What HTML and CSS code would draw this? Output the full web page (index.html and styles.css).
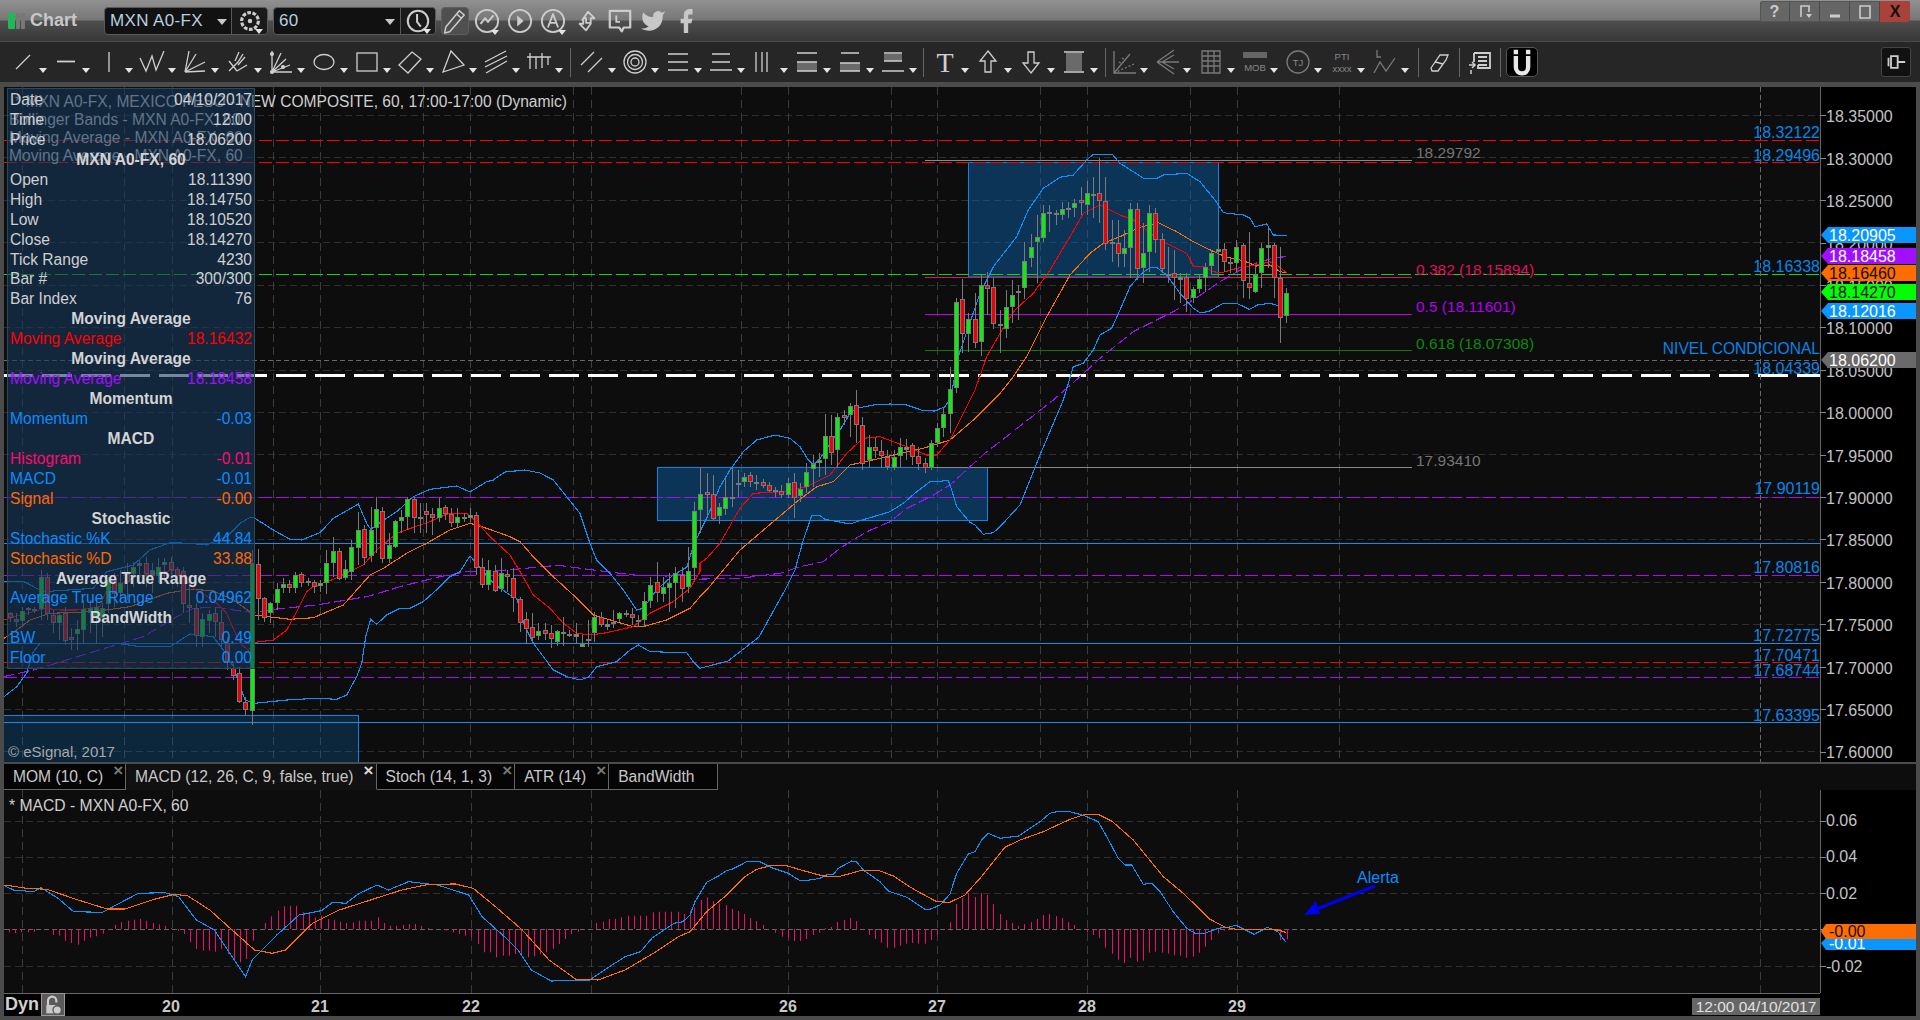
FILE: index.html
```html
<!DOCTYPE html>
<html lang="en">
<head>
<meta charset="utf-8">
<title>Chart - MXN A0-FX</title>
<link rel="stylesheet" href="styles.css">
</head>
<body>
<div class="window">
  <header class="titlebar">
    <div class="logo"><i class="logo-green"></i><i class="logo-gray"></i><i class="logo-gray"></i></div>
    <div class="app-name">Chart</div>
    <div class="combo combo-symbol">
      <span class="combo-text">MXN A0-FX</span><i class="caret caret-combo"></i>
      <span class="combo-btn">
        <svg class="ico" viewBox="0 0 28 28"><circle cx="14" cy="14" r="9" stroke-dasharray="4 1.6" stroke-width="3.4"/><circle cx="14" cy="14" r="2.4" fill="#ccc" stroke="none"/></svg><i class="caret caret-mini"></i>
      </span>
    </div>
    <div class="combo combo-interval">
      <span class="combo-text">60</span><i class="caret caret-combo"></i>
      <span class="combo-btn combo-btn-clock">
        <svg class="ico" viewBox="0 0 28 28"><circle cx="14" cy="14" r="11" stroke-width="2.2"/><path d="M13 6.5V15L17 20" stroke-width="2.2"/></svg><i class="caret caret-mini"></i>
      </span>
    </div>
    <div class="pencil-btn"><svg class="ico" viewBox="0 0 24 24"><path d="M7 22L2.5 23L3.5 17.5L16 2.5L20.5 6.5L7.5 21.5ZM13.5 5.5L18 9.5" stroke-width="1.4"/></svg></div>
    <div class="title-icons">
      <span class="title-ico"><svg class="ico" viewBox="0 0 28 28"><circle cx="14" cy="14" r="12" stroke-width="2"/><path d="M7 17L12 11L15 15L21 8" stroke-width="2.2"/></svg><i class="caret caret-mini"></i></span>
      <span class="title-ico"><svg class="ico" viewBox="0 0 28 28"><circle cx="14" cy="14" r="12" stroke-width="2"/><path d="M11 8L18 14L11 20Z" fill="#ccc" stroke="none"/></svg></span>
      <span class="title-ico"><svg class="ico" viewBox="0 0 28 28"><circle cx="14" cy="14" r="12" stroke-width="2"/><path d="M8.5 21L14 6.5L19.5 21M10.5 16H17.5" stroke-width="2"/></svg><i class="caret caret-mini"></i></span>
      <span class="title-ico"><svg class="ico" viewBox="0 0 28 28"><path d="M9 13L15 4L15 4L22 11H18L18 16H13V11H10ZM18 15L18 17L13 24L6 17H10V13" stroke-width="2"/></svg></span>
      <span class="title-ico"><svg class="ico" viewBox="0 0 28 28"><path d="M3 3H25V21H18L16 25L13 21H3Z" stroke-width="2.4"/><path d="M10 8V15H14" stroke-width="2"/></svg></span>
      <span class="title-ico"><svg class="ico" viewBox="0 0 24 24"><path class="solid" d="M23 3a10.900 10.900 0 0 1-3 1.400 4.500 4.500 0 0 0-7.900 3v1A10.700 10.700 0 0 1 3 4s-4 9 5 13a11.600 11.600 0 0 1-7 2c9 5 20 0 20-11.500a4.500 4.500 0 0 0 0-.8A7.700 7.700 0 0 0 23 3z"/></svg></span>
      <span class="title-ico"><svg class="ico" viewBox="0 0 24 24"><path class="solid" d="M18 1h-3a5 5 0 0 0-5 5v4H7v4h3v9h4v-9h3l1-4h-4V7a1 1 0 0 1 1-1h3z"/></svg></span>
    </div>
    <div class="win-btns">
      <span class="win-btn">?</span>
      <span class="win-btn"><svg class="ico-sm" viewBox="0 0 14 16"><path d="M3 13V2H11V8" stroke-width="1.6"/><path d="M8 10H14L11 14Z" fill="#ccc" stroke="none"/></svg></span>
      <span class="win-btn"><svg class="ico-sm" viewBox="0 0 14 16"><path d="M2 12H12" stroke-width="3"/></svg></span>
      <span class="win-btn"><svg class="ico-sm" viewBox="0 0 14 16"><path d="M2 2H12V14H2Z" stroke-width="1.6"/></svg></span>
      <span class="win-btn win-close">X</span>
    </div>
  </header>

  <nav class="toolbar">
    <div class="tool-group">
      <span class="tool"><svg viewBox="0 0 24 24"><path d="M5 19L19 5"/></svg><i class="caret"></i></span>
      <span class="tool"><svg viewBox="0 0 24 24"><path d="M3 11.500H21" stroke-width="1.800"/></svg><i class="caret"></i></span>
      <span class="tool"><svg viewBox="0 0 24 24"><path d="M12 2V22"/></svg><i class="caret"></i></span>
      <span class="tool"><svg viewBox="0 0 24 24"><path d="M0 8L6 21L12 6L16 20L24 1"/></svg><i class="caret"></i></span>
      <span class="tool"><svg viewBox="0 0 24 24"><path d="M2 22L6 1M2 22L13 4M2 22L22 12M2 22L22 21"/></svg><i class="caret"></i></span>
      <span class="tool"><svg viewBox="0 0 24 24"><path d="M3 11L11 21M3 21L12 12L17 4M9 11L13 2M12 15L19 7M11 21L21 15"/></svg><i class="caret"></i></span>
      <span class="tool"><svg viewBox="0 0 24 24"><path d="M3 1V22M3 22H23M3 22L12 3M3 22L17 9M3 22L21 15"/><circle cx="3" cy="4" r="1.400" class="node"/><circle cx="14" cy="17" r="1.400" class="node"/><circle cx="3" cy="22" r="1.400" class="node"/></svg><i class="caret"></i></span>
      <span class="tool"><svg viewBox="0 0 24 24"><ellipse cx="12" cy="12" rx="10" ry="7.500"/></svg><i class="caret"></i></span>
      <span class="tool"><svg viewBox="0 0 24 24"><rect x="2" y="3" width="20" height="18"/></svg><i class="caret"></i></span>
      <span class="tool"><svg viewBox="0 0 24 24"><path d="M14 2L23 9L10 23L1 15Z"/></svg><i class="caret"></i></span>
      <span class="tool"><svg viewBox="0 0 24 24"><path d="M10 1L23 15L2 22Z"/></svg><i class="caret"></i></span>
      <span class="tool"><svg viewBox="0 0 24 24"><path d="M1 12L22 1M1 17L23 6M2 23L23 11"/></svg><i class="caret"></i></span>
      <span class="tool"><svg viewBox="0 0 24 24"><path d="M0 7H24M3 3V19M9 7V19M15 3V18M21 7V15"/></svg><i class="caret"></i></span>
    </div>
    <i class="tool-sep tool-sep-a"></i>
    <div class="tool-group">
      <span class="tool"><svg viewBox="0 0 24 24"><path d="M1 15L14 2M8 22L22 8"/></svg><i class="caret"></i></span>
      <span class="tool"><svg viewBox="0 0 24 24"><circle cx="12" cy="12" r="11"/><circle cx="12" cy="12" r="7.500"/><circle cx="12" cy="12" r="4"/></svg><i class="caret"></i></span>
      <span class="tool"><svg viewBox="0 0 24 24"><path d="M2 4H22M2 12H22M2 20H22"/></svg><i class="caret"></i></span>
      <span class="tool"><svg viewBox="0 0 24 24"><path d="M3 4H21M3 12H21M1 20H23"/></svg><i class="caret"></i></span>
      <span class="tool"><svg viewBox="0 0 24 24"><path d="M4 2V22M10 2V22M15 2V22"/></svg><i class="caret"></i></span>
      <span class="tool"><svg viewBox="0 0 24 24"><rect class="gray" x="2" y="12" width="20" height="9"/><path d="M2 3H22M2 12H22M2 21H22"/></svg><i class="caret"></i></span>
      <span class="tool"><svg viewBox="0 0 24 24"><rect class="gray" x="2" y="13" width="20" height="8"/><path d="M3 3H21M2 13H22M2 21H22"/></svg><i class="caret"></i></span>
      <span class="tool"><svg viewBox="0 0 24 24"><rect class="gray" x="3" y="4" width="18" height="7"/><path d="M3 3H21M3 11H21M1 21H23"/></svg><i class="caret"></i></span>
    </div>
    <i class="tool-sep tool-sep-b"></i>
    <div class="tool-group">
      <span class="tool"><svg viewBox="0 0 24 24"><text class="tool-t" x="12" y="22">T</text></svg><i class="caret"></i></span>
      <span class="tool"><svg viewBox="0 0 24 24"><path d="M12 1L20 11H15V22H9V11H4Z"/></svg><i class="caret"></i></span>
      <span class="tool"><svg viewBox="0 0 24 24"><path d="M12 23L20 13H15V2H9V13H4Z"/></svg><i class="caret"></i></span>
      <span class="tool"><svg viewBox="0 0 24 24"><rect class="gray" x="4" y="3" width="16" height="18"/><path d="M2 2H22M2 22H22"/></svg><i class="caret"></i></span>
    </div>
    <i class="tool-sep tool-sep-c"></i>
    <div class="tool-group tool-group-dim">
      <span class="tool"><svg viewBox="0 0 24 24"><path d="M2 1V23H24M2 23L18 4" /><path d="M2 23L22 14M7 12L10 14M10 8L13 10" stroke-dasharray="2 2"/></svg><i class="caret"></i></span>
      <span class="tool"><svg viewBox="0 0 24 24"><path d="M1 12L18 0M1 12L23 12M1 12L18 24M6 12L18 5M6 12L18 19"/></svg><i class="caret"></i></span>
      <span class="tool"><svg viewBox="0 0 24 24"><path d="M3 1H21V23H3ZM9 1V23M15 1V23M3 6H21M3 11H21M3 16H21"/></svg><i class="caret"></i></span>
      <span class="tool"><svg viewBox="0 0 24 24"><rect class="gray" x="0" y="2" width="24" height="6"/><text class="tool-small" x="12" y="21">MOB</text></svg><i class="caret"></i></span>
      <span class="tool"><svg viewBox="0 0 24 24"><circle cx="12" cy="12" r="11"/><text class="tool-small" x="12" y="16">TJ</text></svg><i class="caret"></i></span>
      <span class="tool"><svg viewBox="0 0 24 24"><text class="tool-small" x="12" y="10">PTI</text><text class="tool-small" x="12" y="22">xxxx</text></svg><i class="caret"></i></span>
      <span class="tool"><svg viewBox="0 0 24 24"><path d="M4 0V7H8M1 23L7 12L13 21L22 8"/></svg><i class="caret"></i></span>
    </div>
    <i class="tool-sep tool-sep-d"></i>
    <span class="tool tool-plain"><svg viewBox="0 0 24 24"><path d="M4 18L13 5H21L19 10L11 21H5ZM8.500 12L16 14"/></svg></span>
    <i class="tool-sep"></i>
    <span class="tool tool-plain"><svg viewBox="0 0 24 24"><path d="M6 3H22V18H10V15M6 3V12M10 7H19M10 11H19M10 15H19" stroke-width="1.800"/><path d="M1 15H7M4 12L7 15L4 18M3 20V24" stroke-width="1.500"/></svg></span>
    <i class="tool-sep"></i>
    <span class="magnet"><svg viewBox="0 0 24 32"><path class="magnet-u" d="M5 9V22A7 7 0 0 0 19 22V9"/><path class="magnet-tip" d="M5 2V7M19 2V7"/></svg></span>
    <span class="pin"><svg viewBox="0 0 24 24"><path d="M3 7V17M6 5H14V19H6ZM14 12H23" stroke-width="2.200"/></svg></span>
  </nav>

  <section class="chart-pane">
    <svg class="plot" viewBox="4 87 1912 675" xmlns="http://www.w3.org/2000/svg">
      <rect class="axis-bg" x="1820" y="87" width="96" height="675"/>
      <g id="grid"></g>
      <g id="boxes">
        <rect class="box" x="968.500" y="162.500" width="250" height="114.500"/>
        <rect class="box" x="657.500" y="467.500" width="330" height="53"/>
        <rect class="box box-low" x="3" y="715.500" width="355.500" height="50"/>
      </g>
      <g class="levels">
        <path class="lv red" d="M4 140.500H1820M4 162.500H1820M4 662.500H1820"/>
        <path class="lv lime" d="M4 274.500H1820"/>
        <path class="lv white" d="M3 375.500H1820"/>
        <path class="lv purple" d="M4 497.500H1820M4 575.500H1820M4 677.500H1820"/>
        <path class="lv steel" d="M4 543.500H1820M4 643.500H1820M4 722.500H1820"/>
        <path class="lv cross" d="M4 360.500H1820M1760.500 87V762"/>
        <path class="lv fib-gray" d="M925 160.500H1412M925 467.500H1412"/>
        <path class="lv fib-pink" d="M925 277.500H1412"/>
        <path class="lv fib-purple" d="M925 314.500H1412"/>
        <path class="lv fib-green" d="M925 350.500H1412"/>
      </g>
      <g id="studies"></g>
      <g id="candles"></g>

      <text class="head" x="15" y="107">* MXN A0-FX, MEXICO PESO - NEW COMPOSITE, 60, 17:00-17:00 (Dynamic)</text>
      <text class="head" x="9" y="125">Bollinger Bands - MXN A0-FX, 60</text>
      <text class="head" x="9" y="143">Moving Average - MXN A0-FX, 60</text>
      <text class="head" x="9" y="161">Moving Average - MXN A0-FX, 60</text>

      <text class="copy" x="8" y="757">© eSignal, 2017</text>

      <text class="fib-l fib-l-gray" x="1416" y="158">18.29792</text>
      <text class="fib-l fib-l-pink" x="1416" y="275">0.382 (18.15894)</text>
      <text class="fib-l fib-l-purple" x="1416" y="312">0.5 (18.11601)</text>
      <text class="fib-l fib-l-green" x="1416" y="349">0.618 (18.07308)</text>
      <text class="fib-l fib-l-gray" x="1416" y="466">17.93410</text>

      <g class="lvl-labels">
        <text x="1820" y="138">18.32122</text>
        <text x="1820" y="161">18.29496</text>
        <text x="1820" y="272">18.16338</text>
        <text class="lvl-note" x="1820" y="354">NIVEL CONDICIONAL</text>
        <text x="1820" y="374">18.04339</text>
        <text x="1820" y="494">17.90119</text>
        <text x="1820" y="573">17.80816</text>
        <text x="1820" y="641">17.72775</text>
        <text x="1820" y="661">17.70471</text>
        <text x="1820" y="676">17.68744</text>
        <text x="1820" y="721">17.63395</text>
      </g>

      <path class="axis-line" d="M1820.500 87V762"/>
      <path class="axis-ticks" d="M1820 115.500h6M1820 158.500h6M1820 200.500h6M1820 243.500h6M1820 285.500h6M1820 327.500h6M1820 370.500h6M1820 412.500h6M1820 455.500h6M1820 497.500h6M1820 539.500h6M1820 582.500h6M1820 624.500h6M1820 667.500h6M1820 709.500h6M1820 752.500h6"/>
      <g class="axis-labels">
        <text x="1826" y="122">18.35000</text>
        <text x="1826" y="165">18.30000</text>
        <text x="1826" y="207">18.25000</text>
        <text x="1826" y="250">18.20000</text>
        <text x="1826" y="292">18.15000</text>
        <text x="1826" y="334">18.10000</text>
        <text x="1826" y="377">18.05000</text>
        <text x="1826" y="419">18.00000</text>
        <text x="1826" y="462">17.95000</text>
        <text x="1826" y="504">17.90000</text>
        <text x="1826" y="546">17.85000</text>
        <text x="1826" y="589">17.80000</text>
        <text x="1826" y="631">17.75000</text>
        <text x="1826" y="674">17.70000</text>
        <text x="1826" y="716">17.65000</text>
        <text x="1826" y="758">17.60000</text>
      </g>
      <g class="tags">
        <path class="tag-blue" d="M1821 235L1828 227H1916V243H1828Z"/><text class="tag-w" x="1829" y="241">18.20905</text>
        <path class="tag-purple" d="M1821 256L1828 248H1916V264H1828Z"/><text class="tag-w" x="1829" y="262">18.18458</text>
        <path class="tag-orange" d="M1821 273L1828 265H1916V281H1828Z"/><text class="tag-k" x="1829" y="279">18.16460</text>
        <path class="tag-green" d="M1821 292L1828 284H1916V300H1828Z"/><text class="tag-k" x="1829" y="298">18.14270</text>
        <path class="tag-blue" d="M1821 311L1828 303H1916V319H1828Z"/><text class="tag-w" x="1829" y="317">18.12016</text>
        <path class="tag-gray" d="M1821 360L1828 352H1916V368H1828Z"/><text class="tag-w" x="1829" y="366">18.06200</text>
      </g>
    </svg>

    <aside class="info">
      <div class="row"><span>Date</span><span>04/10/2017</span></div>
      <div class="row"><span>Time</span><span>12:00</span></div>
      <div class="row"><span>Price</span><span>18.06200</span></div>
      <div class="row hdr">MXN A0-FX, 60</div>
      <div class="row"><span>Open</span><span>18.11390</span></div>
      <div class="row"><span>High</span><span>18.14750</span></div>
      <div class="row"><span>Low</span><span>18.10520</span></div>
      <div class="row"><span>Close</span><span>18.14270</span></div>
      <div class="row"><span>Tick Range</span><span>4230</span></div>
      <div class="row"><span>Bar #</span><span>300/300</span></div>
      <div class="row"><span>Bar Index</span><span>76</span></div>
      <div class="row hdr">Moving Average</div>
      <div class="row c-red"><span>Moving Average</span><span>18.16432</span></div>
      <div class="row hdr">Moving Average</div>
      <div class="row c-purple"><span>Moving Average</span><span>18.18458</span></div>
      <div class="row hdr">Momentum</div>
      <div class="row c-blue"><span>Momentum</span><span>-0.03</span></div>
      <div class="row hdr">MACD</div>
      <div class="row c-pink"><span>Histogram</span><span>-0.01</span></div>
      <div class="row c-blue"><span>MACD</span><span>-0.01</span></div>
      <div class="row c-orange"><span>Signal</span><span>-0.00</span></div>
      <div class="row hdr">Stochastic</div>
      <div class="row c-blue"><span>Stochastic %K</span><span>44.84</span></div>
      <div class="row c-orange"><span>Stochastic %D</span><span>33.88</span></div>
      <div class="row hdr">Average True Range</div>
      <div class="row c-blue"><span>Average True Range</span><span>0.04962</span></div>
      <div class="row hdr">BandWidth</div>
      <div class="row c-blue"><span>BW</span><span>0.49</span></div>
      <div class="row c-blue"><span>Floor</span><span>0.00</span></div>
    </aside>
  </section>

  <div class="tabs">
    <div class="tab">MOM (10, C)<span class="tab-x">×</span></div>
    <div class="tab tab-on">MACD (12, 26, C, 9, false, true)<span class="tab-x">×</span></div>
    <div class="tab">Stoch (14, 1, 3)<span class="tab-x">×</span></div>
    <div class="tab">ATR (14)<span class="tab-x">×</span></div>
    <div class="tab">BandWidth</div>
  </div>

  <section class="macd-pane">
    <svg class="plot" viewBox="4 790 1912 226" xmlns="http://www.w3.org/2000/svg">
      <rect class="axis-bg" x="1820" y="790" width="96" height="226"/>
      <rect class="axis-bg" x="4" y="993" width="1912" height="23"/>
      <g id="macd-grid"></g>
      <path class="zero" d="M4 929.500H1820"/>
      <g id="macd-hist"></g>
      <g id="macd-lines"></g>
      <text class="head head-macd" x="9" y="811">* MACD - MXN A0-FX, 60</text>
      <text class="alert" x="1357" y="883">Alerta</text>
      <path class="alert-arrow" d="M1375 886L1312 911"/>
      <path class="alert-head" d="M1304 915L1316 901L1320 914Z"/>
      <path class="axis-line" d="M1820.500 790V993M4 993.500H1820"/>
      <path class="axis-ticks" d="M1820 821.500h6M1820 857.500h6M1820 893.500h6M1820 929.500h6M1820 966.500h6"/>
      <g class="axis-labels">
        <text x="1826" y="826">0.06</text>
        <text x="1826" y="862">0.04</text>
        <text x="1826" y="899">0.02</text>
        <text x="1826" y="972">-0.02</text>
      </g>
      <g class="tags">
        <path class="tag-pink" d="M1821 932L1826 927V938Z"/>
        <path class="tag-blue" d="M1821 943L1826 938H1916V950H1826Z"/><text class="tag-w" x="1829" y="949">-0.01</text>
        <path class="tag-orange" d="M1821 931L1826 924H1916V939H1826Z"/><text class="tag-k" x="1829" y="937">-0.00</text>
      </g>
      <g class="dates">
        <text x="171" y="1012">20</text>
        <text x="320" y="1012">21</text>
        <text x="471" y="1012">22</text>
        <text x="788" y="1012">26</text>
        <text x="937" y="1012">27</text>
        <text x="1087" y="1012">28</text>
        <text x="1237" y="1012">29</text>
      </g>
      <rect class="stamp-bg" x="1692" y="998" width="128" height="17"/>
      <text class="stamp" x="1756" y="1012">12:00 04/10/2017</text>
    </svg>
    <div class="dyn">
      <span class="dyn-text">Dyn</span>
      <span class="dyn-lock"><svg viewBox="0 0 24 24"><path d="M6 12V7A5 5 0 0 1 16 7V9" stroke-width="2.600"/><rect class="solid" x="4" y="12" width="11" height="10"/><circle class="lock-dot" cx="17" cy="18" r="5"/></svg></span>
    </div>
  </section>
</div>
<script src="chart.js"></script>
</body>
</html>
```

FILE: styles.css
```css
* { box-sizing: border-box; }
html, body { margin: 0; padding: 0; background: #4a4a4a; }
body { font-family: "Liberation Sans", Arial, sans-serif; color: #ccc; overflow: hidden; }

.window { width: 1920px; height: 1020px; display: flex; flex-direction: column; padding: 0 4px 4px; background: #4b4b4b; }

/* title bar */
.titlebar {
  height: 41px; margin: 0 -4px; padding-left: 8px; display: flex; align-items: center; flex: none;
  background: linear-gradient(#909090 0, #777 20px, #4e4e4e 21px, #383838 41px);
}
.logo { display: flex; gap: 1px; width: 17px; height: 16px; }
.logo i { display: block; height: 16px; border-radius: 1px; }
.logo-green { width: 7px; background: #1db954; }
.logo-gray { width: 4px; background: #777; }
.app-name { margin-left: 5px; width: 74px; font-size: 18px; font-weight: bold; color: #c8c8c8; }
.combo { position: relative; display: flex; align-items: center; height: 28px; background: #111; border: 1px solid #5a5a5a; border-radius: 4px; font-size: 17px; color: #b8cfe0; }
.combo-symbol { width: 164px; }
.combo-interval { width: 163px; margin-left: 5px; }
.combo-text { padding-left: 5px; letter-spacing: .35px; }
.combo-btn { position: absolute; top: 0; bottom: 0; display: flex; align-items: center; justify-content: center; border-left: 1px solid #5a5a5a; background: #1a1a1a; border-radius: 0 4px 4px 0; }
.combo-symbol .combo-btn { left: 126px; width: 36px; }
.combo-interval .combo-btn { left: 126px; width: 35px; }
.ico { width: 26px; height: 26px; fill: none; stroke: #ccc; stroke-linejoin: round; }
.ico-sm { width: 14px; height: 16px; fill: none; stroke: #ccc; }
.solid { fill: #c8c8c8; stroke: none; }
.pencil-btn { width: 28px; height: 28px; margin-left: 5px; border: 1px solid #5f5f5f; border-radius: 4px; background: #4f4f4f; display: flex; align-items: center; justify-content: center; }
.title-icons { display: flex; margin-left: 1px; }
.title-ico { position: relative; width: 33.300px; height: 28px; display: flex; align-items: center; justify-content: center; }
.win-btns { margin-left: auto; margin-right: 10px; align-self: flex-start; margin-top: 1px; display: flex; height: 21px; background: #666; border-radius: 3px; box-shadow: inset 0 0 0 1px #555; }
.win-btn { width: 30px; display: flex; align-items: center; justify-content: center; border-right: 1px solid #4a4a4a; font-size: 16px; font-weight: bold; color: #ccc; }
.win-close { background: #a8423a; border-right: 0; border-radius: 0 3px 3px 0; color: #111; }

/* carets */
.caret { display: block; width: 0; height: 0; border: 4px solid transparent; border-bottom: 0; border-top: 5px solid #e4e4e4; }
.caret-combo { position: absolute; right: 40px; top: 11px; border-width: 6px 5px 0; border-top-color: #c8c8c8; }
.caret-mini { position: absolute; right: 4px; bottom: 0; }

/* drawing toolbar */
.toolbar {
  height: 41px; margin: 0 -4px; padding-left: 1.500px; display: flex; align-items: stretch; flex: none;
  background: #262626; border-top: 1px solid #4a4a4a; 
}
.tool-group { display: flex; }
.tool { position: relative; width: 43px; display: flex; align-items: center; justify-content: center; flex: none; }
.tool svg { width: 24px; height: 24px; fill: none; stroke: #cfcfcf; stroke-width: 1.300; overflow: visible; }
.tool .caret { position: absolute; left: 37px; top: 26px; }
.tool .node { fill: #cfcfcf; }
.tool .gray { fill: #6a6a6a; stroke: none; }
.tool-t { font: 28px "Liberation Serif", serif; text-anchor: middle; fill: #cfcfcf; stroke: none; }
.tool-small { font: 9.500px "Liberation Sans", sans-serif; text-anchor: middle; fill: #888; stroke: none; }
.tool-group-dim { margin-left: -3px; }
.tool-group-dim .tool { width: 43.500px; }
.tool-group-dim svg { stroke: #7a7a7a; }
.tool-group-dim .gray { fill: #666; }
.tool-sep { width: 1px; margin: 6px 0 5px; background: #666; flex: none; }
.tool-sep-a { margin-left: 9px; }
.tool-sep-b { margin-left: 8px; }
.tool-sep-c { margin-left: 9px; }
.tool-sep-d { margin-left: 11px; }
.tool-plain { width: 40px; }
.magnet { width: 32px; height: 30px; margin: 5px 0 0 5px; background: #000; border: 1px solid #555; border-radius: 5px; display: flex; align-items: center; justify-content: center; }
.magnet svg { width: 24px; height: 28px; fill: none; }
.magnet-u { stroke: #e8e8e8; stroke-width: 5; }
.magnet-tip { stroke: #e8e8e8; stroke-width: 5; }
.pin { width: 30px; height: 30px; margin: 5px 9px 0 auto; background: #111; border: 1px solid #444; border-radius: 3px; display: flex; align-items: center; justify-content: center; }
.pin svg { width: 20px; height: 20px; fill: none; stroke: #ccc; }

/* main chart */
.chart-pane { position: relative; height: 675px; margin-top: 5px; flex: none; background: #0d0d0d; }
.plot { position: absolute; inset: 0; width: 100%; height: 100%; display: block; overflow: hidden; font-family: "Liberation Sans", Arial, sans-serif; }
.axis-bg { fill: #000; }
.grid-h { stroke: #2e2e2e; stroke-dasharray: 7 4; fill: none; }
.grid-v { stroke: #3c3c3c; stroke-dasharray: 8 5; fill: none; }
.box { fill: rgba(10, 96, 168, .48); stroke: #0a84e6; stroke-width: 1; }
.box-low { fill: rgba(10, 96, 168, .3); }
.lv { fill: none; stroke-width: 1; }
.red { stroke: #ff0000; stroke-dasharray: 13 4; }
.lime { stroke: #00e000; stroke-dasharray: 13 4; }
.white { stroke: #fff; stroke-width: 3; stroke-dasharray: 30 9; }
.purple { stroke: #a010f0; stroke-dasharray: 13 4; }
.steel { stroke: #1a8ce6; }
.cross { stroke: #6a6a6a; stroke-dasharray: 5 3; }
.fib-gray { stroke: #8a8a8a; }
.fib-pink { stroke: #e0106e; }
.fib-purple { stroke: #c000f0; }
.fib-green { stroke: #0a7a0a; }
.st { fill: none; stroke-width: 1.100; shape-rendering: crispEdges; }
.st-blue { stroke: #0f90ff; }
.st-red { stroke: #f00; }
.st-orange { stroke: #ff6c00; }
.st-purple { stroke: #a010ff; stroke-dasharray: 11 4; }
.wick { stroke: #7a7a7a; stroke-width: 1; }
.body { stroke: #7a7a7a; stroke-width: 1; }
.c-g { fill: #08f008; }
.c-r { fill: #f00000; }
.c-n { fill: #8a8a8a; }
.head { font-size: 15.600px; fill: #cfcfcf; }
.head-macd { font-size: 15.700px; }
.copy { font-size: 15px; fill: #a8a8a8; }
.fib-l { font-size: 15.500px; }
.fib-l-gray { fill: #757575; }
.fib-l-pink { fill: #e0105a; }
.fib-l-purple { fill: #b000f0; }
.fib-l-green { fill: #0a8a0a; }
.lvl-labels text { font-size: 16px; fill: #0a84e6; text-anchor: end; }
.lvl-labels .lvl-note { font-size: 15.600px; }
.axis-line { stroke: #666; fill: none; }
.axis-ticks { stroke: #888; fill: none; }
.axis-labels text { font-size: 16px; fill: #c2c2c2; }
.tags text { font-size: 16px; }
.tag-w { fill: #fff; }
.tag-k { fill: #111; }
.tag-blue { fill: #0a96ff; }
.tag-purple { fill: #a010ff; }
.tag-orange { fill: #ff6c00; }
.tag-green { fill: #00ff00; }
.tag-gray { fill: #6a6a6a; }
.tag-pink { fill: #f0107a; }

/* info window */
.info {
  position: absolute; left: 3px; top: 1px; width: 248px; padding-top: 1px; z-index: 2;
  background: rgba(22, 55, 92, .6); border: 1px solid #294a5e; font-size: 15.600px; color: #cfcfcf;
}
.row { height: 19.950px; line-height: 19.950px; padding: 0 2px; display: flex; justify-content: space-between; white-space: nowrap; }
.hdr { justify-content: center; font-weight: bold; color: #d4d4d4; }
.c-red { color: #ff0000; }
.c-purple { color: #a010ff; }
.c-blue { color: #0a8cff; }
.c-pink { color: #ff0a70; }
.c-orange { color: #ff6a00; }

/* study tabs */
.tabs { display: flex; height: 28px; flex: none; background: #0d0d0d; border-top: 2px solid #4b4b4b; font-size: 15.600px; }
.tab { position: relative; padding: 4px 22px 0 9px; background: #050505; color: #c8c8c8; border-right: 1px solid #666; border-bottom: 1px solid #666; white-space: nowrap; }
.tab-on { background: #111; color: #c8c8c8; border-bottom-color: #111; }
.tab-x { position: absolute; right: 2px; top: -3px; font-size: 17px; font-weight: bold; color: #777; }
.tab-on .tab-x { color: #ddd; }

/* MACD pane */
.macd-pane { position: relative; flex: 1; background: #0d0d0d; }
.zero { stroke: #666; stroke-dasharray: 5 3; fill: none; }
.hist { stroke: #f40a68; stroke-width: 1; }
.alert { font-size: 16px; fill: #0a8cff; }
.alert-arrow { stroke: #0000f0; stroke-width: 3; fill: none; }
.alert-head { fill: #0000f0; }
.dates text { font-size: 16px; font-weight: bold; fill: #c8c8c8; text-anchor: middle; }
.stamp-bg { fill: #666; }
.stamp { font-size: 15.500px; fill: #e0e0e0; text-anchor: middle; }
.dyn { position: absolute; left: 0; bottom: 0; height: 23px; display: flex; align-items: center; padding-left: 1px; gap: 2px; }
.dyn-text { font-size: 18px; font-weight: bold; color: #d0d0d0; }
.dyn-lock { width: 24px; height: 23px; background: #5a5a5a; border: 1px solid #999; display: flex; align-items: center; justify-content: center; }
.dyn-lock svg { width: 20px; height: 20px; fill: none; stroke: #ccc; }
.lock-dot { fill: #ccc; stroke: #555; stroke-width: 1.500; }
```

FILE: chart.js
```js
// Zoom-space data: each source crop maps to page pixels by [ox, oy, sx, sy].
var ZONES = {
  a: [0, 0, 1, 1],
  z4: [0, 380, 3, 3], z10: [200, 480, 3, 3], z9: [640, 390, 3, 3], z5: [900, 140, 3, 3],
  z7: [0, 760, 2.24, 3], z12: [690, 790, 3, 3], z8: [1100, 800, 1.912, 3]
};
var NS = 'http://www.w3.org/2000/svg';
function el(parent, tag, attrs) {
  var n = document.createElementNS(NS, tag);
  for (var k in attrs) n.setAttribute(k, attrs[k]);
  parent.appendChild(n);
  return n;
}
function mapX(z, x) { return ZONES[z][0] + x / ZONES[z][2]; }
function mapY(z, v) { return ZONES[z][1] + v / ZONES[z][3]; }
function polyline(parent, cls, segs) {
  var out = [];
  segs.forEach(function (s) {
    for (var i = 0; i < s[1].length; i += 2) {
      out.push(mapX(s[0], s[1][i]).toFixed(1) + ',' + mapY(s[0], s[1][i + 1]).toFixed(1));
    }
  });
  el(parent, 'polyline', { 'class': 'st ' + cls, points: out.join(' ') });
}

/* grid */
var grid = document.getElementById('grid');
var VERT = [22, 124, 172, 273, 320, 423, 470, 573, 591, 741, 788, 891, 937, 1040, 1087, 1190, 1237, 1339];
var d = '';
for (var i = 0; i < 16; i++) d += 'M4 ' + (115.5 + Math.round(i * 42.43)) + 'H1820';
el(grid, 'path', { 'class': 'grid-h', d: d });
d = '';
VERT.forEach(function (x) { d += 'M' + (x + 0.5) + ' 87V762'; });
el(grid, 'path', { 'class': 'grid-v', d: d });

var mg = document.getElementById('macd-grid');
d = '';
[821.5, 857.5, 893.5, 966.5].forEach(function (y) { d += 'M4 ' + y + 'H1820'; });
el(mg, 'path', { 'class': 'grid-h', d: d });
d = '';
[22, 172, 320, 471, 591, 788, 937, 1087, 1237, 1760].forEach(function (x) { d += 'M' + (x + 0.5) + ' 790V993'; });
el(mg, 'path', { 'class': 'grid-v', d: d });

/* price studies */
var st = document.getElementById('studies');
polyline(st, 'st-purple', [
  ['z4', [10,890,100,870,200,840,330,800,430,770,530,710,580,685,650,682,700,690,760,698]],
  ['z10', [220,388,350,375,500,350,600,320,720,290,800,275,920,270,1050,258,1075,256,1180,270,1300,285,1400,288,1470,281]],
  ['z9', [150,568,300,565,420,550,480,530,550,515,600,475,680,425,750,395,800,355,880,315,930,285,990,230,1040,185,1080,155]],
  ['z5', [460,780,540,710,600,655,700,575,760,545,820,515,880,480,960,425,1030,385,1080,365,1130,352,1160,350]]
]);
polyline(st, 'st-blue', [
  ['z4', [12,604,70,604,130,635,280,625,320,575,400,555,450,510,510,488,570,490,620,495,680,470,720,430,750,412]],
  ['z10', [160,112,220,150,270,178,305,180,360,158,400,115,475,72,500,130,512,148,555,118,590,95,640,50,690,28,770,18,810,36,860,5,880,0]],
  ['a', [505,472,525,470,540,473]],
  ['z10', [1060,0,1100,50,1140,100,1170,190,1190,240,1230,280,1270,330,1310,390,1330,385,1370,330,1420,285,1460,262,1483,190]],
  ['z9', [180,425,200,385,240,290,270,240,310,185,350,150,405,135,450,145,480,170,505,210,520,225,540,205,570,160,600,120,630,70,650,55,700,45,750,42,800,45,850,62,885,63,915,50,932,25]],
  ['z5', [175,650,240,460,280,380,350,290,385,210,430,145,480,112,520,105,560,60,580,43,637,43,660,70,700,95,730,115,770,115,790,105,860,100,900,125,945,180,970,218,1030,225,1050,235,1065,260,1100,252,1120,285,1160,286]]
]);
polyline(st, 'st-blue', [
  ['z4', [12,950,50,920,80,880,100,815,120,790,280,790,350,790,420,800,510,800,570,762,640,770,670,810,700,860,735,960,765,970]],
  ['z10', [165,670,260,660,350,655,410,658,440,645,470,590,485,550,497,470,512,418,530,433,560,405,600,385,630,385,670,365,720,320,750,290,780,275,810,228,830,250,880,310,930,345,950,355,975,440,1000,490,1060,570,1100,590,1140,600,1165,592,1190,560,1250,545,1290,510,1315,495,1350,515,1460,518,1480,545,1500,565]],
  ['a', [728,661,759,637]],
  ['z9', [435,600,465,540,490,450,515,377,540,377,555,388,630,402,660,392,750,365,790,340,830,305,870,275,925,272,935,300,950,350,990,397,1005,405,1030,433,1060,428,1080,410]],
  ['a', [1020,505,1040,455]],
  ['z5', [490,780,520,680,550,670,580,630,600,585,635,565,660,510,690,440,720,405,750,382,770,382,800,405,840,460,880,505,900,518,925,515,970,490,1010,490,1048,508,1075,494,1110,490,1135,497]]
]);
polyline(st, 'st-orange', [
  ['z4', [12,775,50,750,90,720,150,700,280,695,390,680,500,640,570,628,640,632,700,660,750,695]],
  ['z10', [165,405,220,412,270,418,340,413,430,375,470,330,510,285,550,265,620,220,680,190,750,150,810,130,860,145,930,170,960,185,1000,230,1060,290,1120,345,1180,405,1300,440,1330,440,1400,420,1470,385,1500,350]],
  ['z9', [200,600,300,480,400,395,470,335,530,290,580,275,630,225,720,205,760,195,850,175,930,150,1000,90,1080,10]],
  ['z5', [340,710,380,650,440,530,510,405,570,340,610,310,660,290,720,262,775,248,830,275,880,305,920,325,975,350,1030,362,1070,378,1110,375,1140,395,1160,398]]
]);
polyline(st, 'st-red', [
  ['z4', [12,720,60,705,100,695,135,685,180,690,230,690,300,680,320,630,410,590,490,575,530,570,580,625,640,660,680,700,720,790,745,810]],
  ['z10', [165,487,220,480,260,450,290,395,320,335,340,320,400,298,490,255,530,210,590,160,640,142,690,125,740,102,800,100,830,125,870,170,930,225,960,275,1000,345,1050,385,1090,430,1130,460,1170,465,1220,458,1300,440,1350,400,1420,365,1470,325,1500,275]],
  ['z9', [180,520,200,505,240,460,300,355,340,310,430,305,500,290,570,255,620,190,670,145,720,140,800,170,860,195,890,195,930,150,960,90,1005,0]],
  ['z5', [260,650,300,580,345,510,400,460,450,390,510,290,550,220,600,195,660,225,700,240,770,295,800,310,860,340,880,378,910,380,940,395,965,398,1010,385,1050,378,1090,370,1110,365,1130,375,1160,398]]
]);

/* candles: [x, high, bodyTop, bodyBottom, low, colour] in crop coordinates */
var CANDLES = {
  z4: [
    [30,695,700,710,725,'r'],[48,700,716,722,740,'r'],[65,680,692,720,740,'g'],[84,680,685,688,705,'n'],[102,680,686,690,700,'n'],
    [122,570,590,685,720,'g'],[140,580,590,700,720,'r'],[158,690,705,727,760,'r'],[176,695,705,725,780,'g'],[196,680,698,780,795,'r'],
    [214,745,770,778,810,'r'],[232,720,748,758,810,'g'],[250,660,688,748,790,'g'],[270,660,683,695,760,'g'],[288,660,682,705,790,'g'],
    [307,670,683,710,770,'g'],[325,590,600,670,700,'g'],[343,580,600,640,680,'r'],[361,570,608,635,660,'g'],[380,550,582,602,660,'r'],
    [400,545,560,580,620,'g'],[418,540,550,555,610,'n'],[438,530,550,580,620,'r'],[456,550,570,585,640,'n'],[474,535,560,585,610,'g'],
    [492,535,545,553,605,'g'],[514,530,545,568,600,'r'],[532,560,566,585,620,'r'],[550,560,572,668,700,'r'],[568,600,675,682,730,'r'],
    [589,670,685,765,800,'r'],[607,700,718,768,800,'g'],[626,690,703,720,760,'g'],[644,680,698,722,770,'r'],[662,690,727,778,800,'r'],
    [682,770,790,845,870,'r'],[700,850,865,885,900,'r'],[718,860,880,962,970,'r'],[736,950,967,988,1005,'r']
  ],
  z10: [
    [157,210,250,690,735,'g'],[175,208,253,355,420,'r'],[193,350,355,412,425,'r'],[211,365,370,395,428,'g'],[232,310,328,365,390,'g'],
    [250,295,312,320,340,'g'],[268,300,312,322,340,'r'],[286,275,284,320,340,'g'],[304,275,283,307,320,'r'],[324,295,302,304,318,'n'],
    [343,300,307,317,338,'r'],[361,300,310,315,335,'g'],[379,210,250,307,342,'g'],[400,170,213,245,290,'g'],[418,205,213,295,300,'r'],
    [436,240,268,290,300,'g'],[454,180,202,272,300,'g'],[475,95,151,200,255,'g'],[493,135,148,230,255,'r'],[512,80,150,225,245,'g'],
    [529,50,88,142,220,'g'],[547,80,92,235,250,'r'],[568,160,195,235,250,'g'],[586,120,122,197,205,'g'],[604,90,112,120,160,'g'],
    [622,50,58,108,150,'g'],[643,50,58,110,160,'r'],[661,70,110,113,160,'n'],[679,70,94,103,160,'r'],[697,85,103,110,165,'r'],
    [718,55,85,110,125,'g'],[736,75,80,100,120,'r'],[754,85,103,127,140,'r'],[772,85,110,127,140,'g'],[793,100,110,113,125,'n'],
    [811,85,105,112,125,'g'],[829,95,105,262,285,'r'],[847,235,262,312,325,'r'],[865,240,270,312,330,'g'],[886,255,272,330,337,'r'],
    [904,235,280,323,335,'g'],[922,270,282,287,335,'r'],[940,265,295,352,395,'r'],[961,350,358,425,455,'r'],[979,395,418,443,490,'r'],
    [997,400,442,470,490,'r'],[1015,430,454,466,480,'g'],[1036,430,450,460,480,'r'],[1054,435,458,475,505,'r'],[1072,450,454,482,497,'g'],
    [1090,410,457,460,497,'n'],[1108,450,461,463,470,'n'],[1129,430,462,468,490,'n'],[1147,465,491,497,498,'g'],[1165,420,476,480,500,'n'],
    [1183,395,412,456,485,'g'],[1204,395,412,433,440,'r'],[1222,420,433,437,450,'n'],[1240,390,425,430,445,'g'],[1258,395,400,413,425,'g'],
    [1279,390,398,400,410,'n'],[1297,385,403,412,435,'r'],[1315,405,420,423,440,'n'],[1333,335,364,418,440,'g'],[1351,290,314,360,385,'g'],
    [1372,245,305,337,365,'r'],[1390,290,320,338,365,'g'],[1408,280,310,322,395,'g'],[1426,260,280,305,385,'g'],[1447,260,284,325,365,'r'],
    [1465,200,272,318,340,'g'],[1483,65,92,262,300,'g']
  ],
  z9: [
    [181,232,313,358,430,'g'],[202,250,307,313,385,'r'],[220,255,313,383,390,'r'],[238,340,352,376,402,'g'],[256,265,320,353,375,'g'],
    [277,235,320,322,352,'n'],[295,240,278,283,320,'g'],[313,250,260,274,290,'g'],[331,245,256,274,290,'r'],[349,255,275,278,300,'n'],
    [370,268,275,286,295,'r'],[388,275,284,301,305,'r'],[406,290,300,303,320,'n'],[424,285,302,313,325,'r'],[445,265,278,313,325,'g'],
    [463,250,277,322,385,'r'],[481,280,296,316,335,'g'],[499,220,245,288,310,'g'],[520,195,223,235,290,'g'],[538,190,211,217,260,'g'],
    [556,72,139,205,255,'g'],[574,75,139,187,225,'r'],[592,70,82,178,235,'g'],[613,60,76,82,105,'r'],[631,40,49,73,140,'g'],
    [649,0,46,102,160,'r'],[667,80,104,218,240,'r'],[688,135,172,208,230,'g'],[706,145,172,181,205,'r'],[724,150,184,196,235,'r'],
    [742,180,200,227,240,'r'],[763,180,200,232,240,'g'],[781,145,172,196,230,'g'],[799,148,172,176,210,'n'],[817,160,166,199,225,'r'],
    [835,170,199,220,240,'r'],[856,205,220,232,250,'r'],[874,150,158,232,240,'g'],[892,100,115,155,170,'g'],[910,55,73,112,140,'g']
  ],
  z5: [
    [151,680,748,820,880,'g'],[169,475,485,742,758,'g'],[187,418,478,580,640,'r'],[205,518,536,580,635,'g'],[226,458,536,606,625,'r'],
    [244,405,434,604,648,'g'],[262,395,434,444,525,'r'],[280,415,442,550,568,'r'],[301,510,553,556,640,'n'],[319,450,500,565,595,'g'],
    [337,420,464,497,550,'g'],[355,435,452,455,540,'n'],[373,305,362,442,478,'g'],[394,283,320,352,382,'g'],[412,225,290,303,430,'g'],
    [430,195,218,290,305,'g'],[448,195,216,220,276,'n'],[469,210,220,223,255,'n'],[487,185,208,222,240,'g'],[505,185,205,208,235,'n'],
    [523,178,188,202,230,'g'],[544,140,181,187,225,'r'],[562,122,160,192,225,'g'],[580,110,163,166,235,'n'],[598,55,160,180,250,'r'],
    [616,112,184,308,330,'r'],[637,240,306,310,365,'n'],[655,240,308,340,380,'r'],[673,270,325,340,380,'g'],[691,190,208,322,415,'g'],
    [712,190,208,385,420,'r'],[730,250,338,382,430,'g'],[748,195,218,334,395,'g'],[766,205,218,298,340,'r'],[787,278,296,385,400,'r'],
    [805,320,401,404,430,'n'],[823,330,398,412,480,'r'],[841,400,412,416,490,'n'],[859,400,412,475,515,'r'],[880,440,448,472,490,'g'],
    [898,405,418,445,460,'g'],[916,370,380,412,455,'g'],[934,330,340,376,405,'g'],[955,310,328,334,395,'g'],[973,310,328,364,395,'r'],
    [991,355,367,370,400,'n'],[1009,300,320,367,395,'g'],[1030,310,316,421,475,'r'],[1048,275,428,440,478,'r'],[1066,375,404,452,460,'g'],
    [1084,310,325,395,445,'g'],[1105,265,315,322,385,'g'],[1123,310,316,412,475,'r'],[1141,320,415,532,608,'r'],[1159,445,458,526,548,'g']
  ]
};
var cg = document.getElementById('candles');
Object.keys(CANDLES).forEach(function (z) {
  CANDLES[z].forEach(function (c) {
    var cx = Math.round(mapX(z, c[0]));
    var hi = Math.round(mapY(z, c[1])), top = Math.round(mapY(z, c[2]));
    var bot = Math.round(mapY(z, c[3])), lo = Math.round(mapY(z, c[4]));
    el(cg, 'path', { 'class': 'wick', d: 'M' + (cx + 0.5) + ' ' + hi + 'V' + lo });
    el(cg, 'rect', { 'class': 'body c-' + c[5], x: cx - 1.5, y: top + 0.5, width: 4, height: Math.max(1, bot - top) });
  });
});

/* MACD histogram */
var hist = document.getElementById('macd-hist');
var H7 = [10,12,10,10,8,0,2,18,20,35,42,47,35,25,22,14,3,-12,-20,-25,-28,-30,-25,-18,-14,-10,-3,5,15,40,60,65,65,68,60,75,90,100,90,35,0,-18,-38,-55,-68,-70,-70,-50,-45,-35,-40,-30,-28,-22,-18,-20,-25,-25,-25,-35,-18,-10,-10,-12,-15,-15,-10,-3,0,0,5,10,15,20,25,45,70,70,85,80,80,75,75,85,82,75,70,60,45,30,15,8,3,0,-18,-22,-30,-30,-35,-40,-40,-40,-40,-50,-52,-52,-52,-52,-45,-55];
var H12 = [13,352,32,330,51,322,70,333,88,340,107,345,127,357,145,363,163,372,181,384,199,393,220,405,238,417,256,428,275,440,295,443,313,453,331,453,349,447,370,435,388,428,406,414,424,411,442,396,463,390,481,384,499,393,520,417,538,435,556,447,574,458,592,473,613,473,631,467,649,461,667,459,685,461,706,461,724,450,742,435,763,417,781,396,799,342,817,324,835,309,856,321,874,309,892,315,910,342,931,372,949,390,967,399,985,408,1003,402,1024,396,1042,387,1060,375,1078,372,1099,378,1117,384,1135,396,1153,405,1174,417,1192,427,1210,435,1228,444,1246,473,1267,491,1285,509,1303,519,1321,503,1342,515,1360,512,1378,488,1396,485,1417,488,1435,491,1453,496,1471,497,1489,503,1510,500,1528,488,1546,470];
var H8 = [213,420,225,400,237,392,249,389,345,420,357,418];
var ZERO = 929;
function bar(x, y) {
  if (Math.abs(y - ZERO) < 0.6) return;
  el(hist, 'path', { 'class': 'hist', d: 'M' + (Math.round(x) + 0.5) + ' ' + ZERO + 'V' + y.toFixed(1) });
}
H7.forEach(function (v, k) { bar(8.9 + 6.25 * k, ZERO + v / 3); });
for (var h = 0; h < H12.length; h += 2) bar(mapX('z12', H12[h]), mapY('z12', H12[h + 1]));
for (h = 0; h < H8.length; h += 2) bar(mapX('z8', H8[h]), mapY('z8', H8[h + 1]));

/* MACD lines */
var ml = document.getElementById('macd-lines');
polyline(ml, 'st-blue', [
  ['z7', [10,377,30,390,75,395,92,383,130,415,165,455,230,457,260,435,310,400,370,398,400,410,440,480,480,510,520,590,550,650,565,600,620,525,670,465,720,452,745,427,775,430,805,400,845,375,870,390,915,365,980,375,1050,405,1080,470,1130,530,1160,570,1190,630,1235,663,1320,660,1360,625,1400,590,1435,575,1460,535,1510,490,1530,485]],
  ['z12', [0,375,15,335,50,277,85,258,110,242,130,236,170,215,210,215,250,235,295,250,330,272,360,270,390,265,410,254,430,253,445,235,485,213,500,216,520,240,570,275,595,303,650,322,705,358,720,358,750,345,780,312,800,250,835,192,855,185,875,150,895,130,930,145,985,138,1050,95,1080,70,1100,65,1135,64,1180,76,1225,95,1250,140,1285,205,1305,225,1325,225,1360,283,1385,280,1410,305,1450,365,1490,415,1515,430,1545,430]],
  ['z8', [225,385,245,382,260,376,295,403,320,382,340,395,355,425]]
]);
polyline(ml, 'st-orange', [
  ['z7', [10,375,60,385,105,388,170,418,240,447,280,447,340,420,390,403,420,407,470,450,520,510,570,570,610,580,640,570,700,490,760,450,830,420,900,390,960,373,1020,372,1060,385,1110,440,1170,510,1230,600,1290,658,1340,660,1400,630,1470,575,1520,530]],
  ['z12', [0,425,50,365,110,315,165,260,200,238,245,226,290,227,340,242,400,258,450,259,515,241,565,241,610,258,670,297,740,335,780,337,825,315,870,265,945,172,990,150,1060,125,1140,88,1185,73,1225,73,1265,93,1330,150,1420,260,1480,310,1560,388]],
  ['z8', [240,382,260,388,340,390,355,397]]
]);
```
